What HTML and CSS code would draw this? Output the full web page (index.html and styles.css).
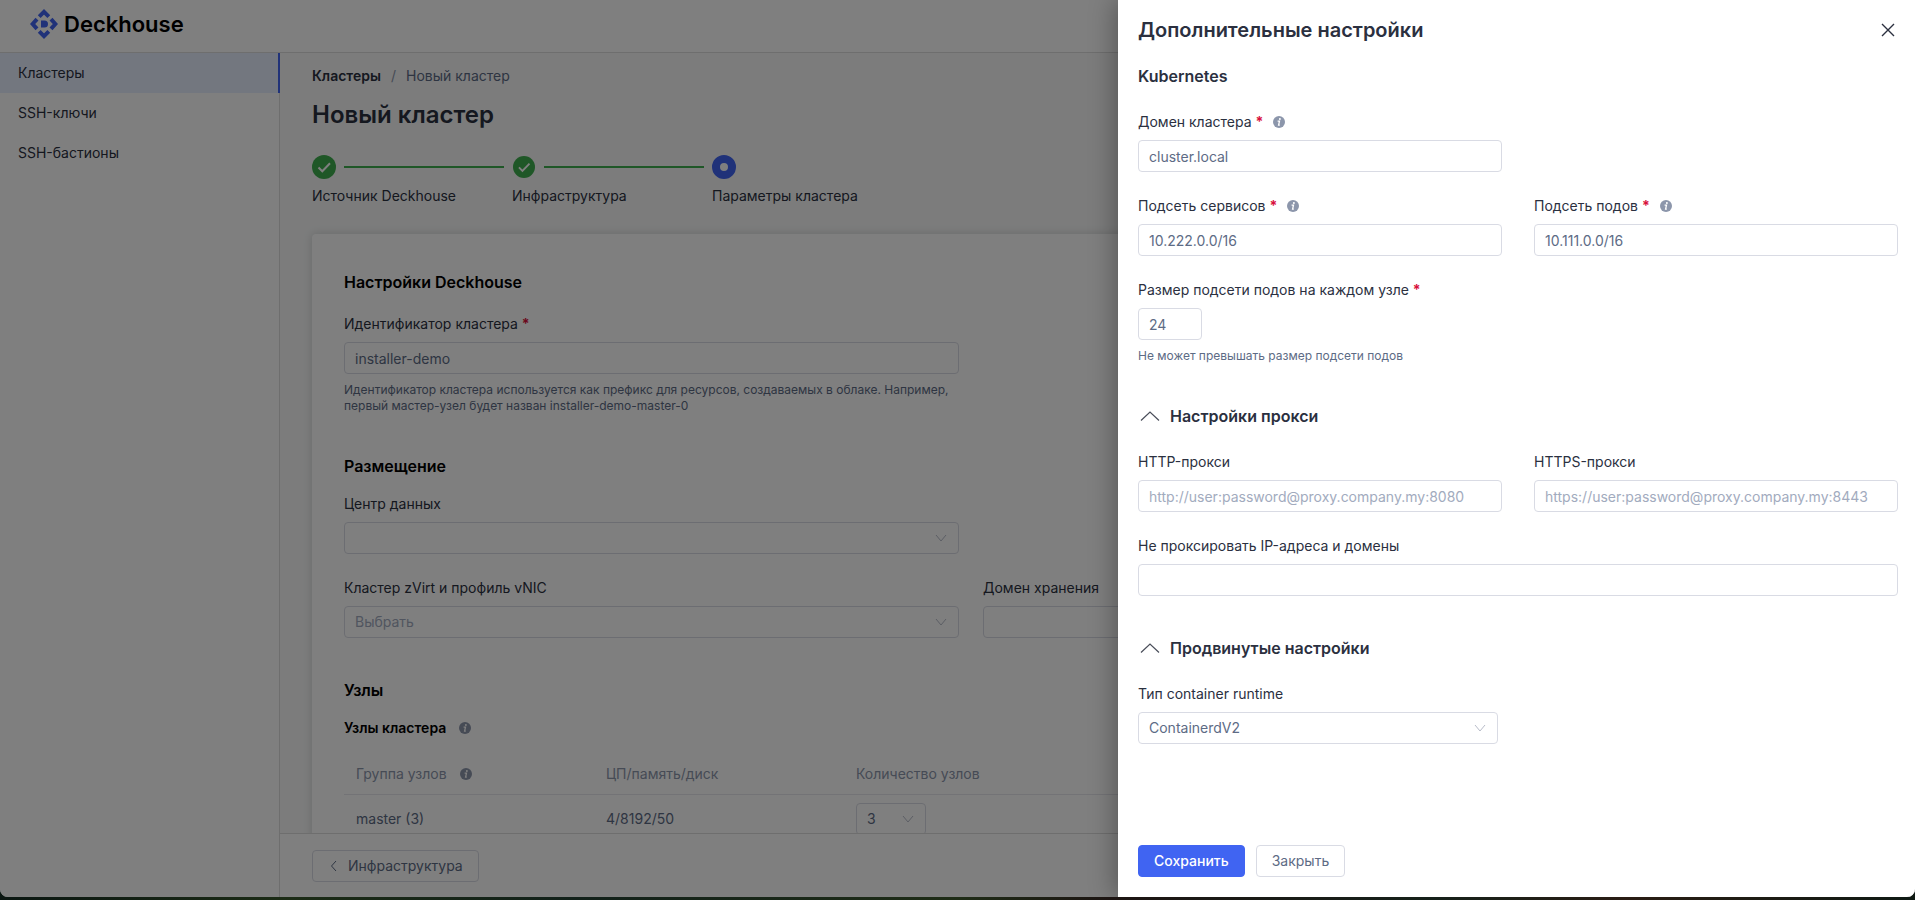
FILE: index.html
```html
<!DOCTYPE html>
<html lang="ru">
<head>
    <meta charset="UTF-8">
    <meta name="viewport" content="width=device-width, initial-scale=1.0">
    <title>Deckhouse - Новый кластер</title>
    <link rel="stylesheet" href="styles.css">
</head>
<body>
    <!-- Shared icons -->
    <svg class="sprite" aria-hidden="true">
        <symbol id="icon-info" viewBox="0 0 12 12">
            <circle cx="6" cy="6" r="6" fill="currentColor"/>
            <circle cx="6.900" cy="3" r="1" fill="#fff"/>
            <path d="M4.600 5.100h1.900L5.600 9.200h1.200" fill="none" stroke="#fff" stroke-width="1.300"/>
        </symbol>
        <symbol id="icon-check" viewBox="0 0 24 24">
            <circle cx="12" cy="12" r="12" fill="#3fae4e"/>
            <path d="M6.500 12.500l3.800 3.800L18 8.200" fill="none" stroke="#fff" stroke-width="2"/>
        </symbol>
        <symbol id="icon-down" viewBox="0 0 12 12">
            <path d="M1 3l5 6 5-6" fill="none" stroke="currentColor"/>
        </symbol>
        <symbol id="icon-up" viewBox="0 0 20 12">
            <path d="M1 10.500L10 2l9 8.500" fill="none" stroke="currentColor" stroke-width="1.200"/>
        </symbol>
    </svg>

    <div class="window">
        <header class="header">
            <a class="logo" href="#">
                <svg width="28" height="30" viewBox="0 0 28 30" fill="none" stroke="#4064f2" stroke-width="4">
                    <path d="M9.200 7.600L14 2.900l4.800 4.700M9.200 22.400l4.800 4.700 4.800-4.700M7 10.200L2.600 15 7 19.800M21 10.200l4.400 4.800-4.400 4.800"/>
                    <path d="M11 11.500h3.500a3.500 3.500 0 0 1 0 7H11z" fill="#4064f2" stroke="none"/>
                </svg>
                <span>Deckhouse</span>
            </a>
        </header>

        <div class="layout">
            <nav class="sidebar">
                <a class="active" href="#">Кластеры</a>
                <a href="#">SSH-ключи</a>
                <a href="#">SSH-бастионы</a>
            </nav>

            <div class="page">
                <main class="content">
                    <div class="breadcrumbs">
                        <a href="#">Кластеры</a>
                        <span class="slash">/</span>
                        <span>Новый кластер</span>
                    </div>
                    <h1>Новый кластер</h1>

                    <ol class="steps">
                        <li class="done">
                            <div class="step-mark"><svg class="step-big"><use href="#icon-check"/></svg></div>
                            Источник Deckhouse
                        </li>
                        <li class="done">
                            <div class="step-mark"><svg class="step-small"><use href="#icon-check"/></svg></div>
                            Инфраструктура
                        </li>
                        <li>
                            <div class="step-mark"><span class="step-current"></span></div>
                            Параметры кластера
                        </li>
                    </ol>

                    <div class="card">
                        <section>
                            <h2 class="card-title">Настройки Deckhouse</h2>
                            <div class="card-grid">
                                <div class="field">
                                    <label for="cluster-id">Идентификатор кластера <span class="required">*</span></label>
                                    <input type="text" id="cluster-id" value="installer-demo">
                                    <p class="hint">Идентификатор кластера используется как префикс для ресурсов, создаваемых в облаке. Например, первый мастер-узел будет назван installer-demo-master-0</p>
                                </div>
                            </div>
                        </section>

                        <section>
                            <h2>Размещение</h2>
                            <div class="card-grid">
                                <div class="field">
                                    <label for="datacenter">Центр данных</label>
                                    <div class="select">
                                        <select id="datacenter"><option></option></select>
                                        <svg><use href="#icon-down"/></svg>
                                    </div>
                                </div>
                                <div class="field first-column">
                                    <label for="zvirt">Кластер zVirt и профиль vNIC</label>
                                    <div class="select empty">
                                        <select id="zvirt"><option>Выбрать</option></select>
                                        <svg><use href="#icon-down"/></svg>
                                    </div>
                                </div>
                                <div class="field">
                                    <label for="storage">Домен хранения</label>
                                    <div class="select">
                                        <select id="storage"><option></option></select>
                                        <svg><use href="#icon-down"/></svg>
                                    </div>
                                </div>
                            </div>
                        </section>

                        <section>
                            <h2>Узлы</h2>
                            <h3>Узлы кластера <svg class="info"><use href="#icon-info"/></svg></h3>
                            <table>
                                <thead>
                                    <tr>
                                        <th>Группа узлов <svg class="info"><use href="#icon-info"/></svg></th>
                                        <th>ЦП/память/диск</th>
                                        <th>Количество узлов</th>
                                        <th></th>
                                    </tr>
                                </thead>
                                <tbody>
                                    <tr>
                                        <td>master (3)</td>
                                        <td>4/8192/50</td>
                                        <td>
                                            <div class="select select-count">
                                                <select aria-label="Количество узлов"><option>3</option></select>
                                                <svg><use href="#icon-down"/></svg>
                                            </div>
                                        </td>
                                        <td></td>
                                    </tr>
                                </tbody>
                            </table>
                        </section>
                    </div>
                </main>

                <footer class="page-footer">
                    <button type="button" class="button">
                        <svg width="12" height="12" viewBox="0 0 12 12"><path d="M8 1L3.500 6 8 11" fill="none" stroke="currentColor"/></svg>
                        Инфраструктура
                    </button>
                </footer>
            </div>
        </div>

        <div class="overlay"></div>

        <aside class="drawer" role="dialog" aria-labelledby="drawer-title">
            <div class="drawer-header">
                <h2 id="drawer-title">Дополнительные настройки</h2>
                <button type="button" class="close" aria-label="Закрыть">
                    <svg width="14" height="14" viewBox="0 0 14 14"><path d="M1 1l12 12M13 1L1 13" stroke="currentColor" stroke-width="1.400"/></svg>
                </button>
            </div>

            <form class="drawer-body">
                <h3>Kubernetes</h3>
                <div class="form-grid">
                    <div class="field">
                        <label for="domain">Домен кластера <span class="required">*</span> <svg class="info"><use href="#icon-info"/></svg></label>
                        <input type="text" id="domain" value="cluster.local">
                    </div>
                    <div class="field first-column">
                        <label for="services">Подсеть сервисов <span class="required">*</span> <svg class="info"><use href="#icon-info"/></svg></label>
                        <input type="text" id="services" value="10.222.0.0/16">
                    </div>
                    <div class="field">
                        <label for="pods">Подсеть подов <span class="required">*</span> <svg class="info"><use href="#icon-info"/></svg></label>
                        <input type="text" id="pods" value="10.111.0.0/16">
                    </div>
                    <div class="field wide">
                        <label for="prefix">Размер подсети подов на каждом узле <span class="required">*</span></label>
                        <input type="text" id="prefix" class="short" value="24">
                        <p class="hint">Не может превышать размер подсети подов</p>
                    </div>
                </div>

                <h3><button type="button" class="toggle"><svg><use href="#icon-up"/></svg>Настройки прокси</button></h3>
                <div class="form-grid">
                    <div class="field">
                        <label for="http">HTTP-прокси</label>
                        <input type="text" id="http" placeholder="http://user:password@proxy.company.my:8080">
                    </div>
                    <div class="field">
                        <label for="https">HTTPS-прокси</label>
                        <input type="text" id="https" placeholder="https://user:password@proxy.company.my:8443">
                    </div>
                    <div class="field wide">
                        <label for="no-proxy">Не проксировать IP-адреса и домены</label>
                        <input type="text" id="no-proxy">
                    </div>
                </div>

                <h3><button type="button" class="toggle"><svg><use href="#icon-up"/></svg>Продвинутые настройки</button></h3>
                <div class="form-grid">
                    <div class="field">
                        <label for="runtime">Тип container runtime</label>
                        <div class="select select-runtime">
                            <select id="runtime"><option>ContainerdV2</option></select>
                            <svg><use href="#icon-down"/></svg>
                        </div>
                    </div>
                </div>
            </form>

            <div class="drawer-footer">
                <button type="button" class="button primary">Сохранить</button>
                <button type="button" class="button">Закрыть</button>
            </div>
        </aside>
    </div>
</body>
</html>
```
FILE: styles.css
```css
* {
    box-sizing: border-box;
}
body {
    margin: 0;
    height: 100vh;
    padding-bottom: 3px;
    overflow: hidden;
    background: linear-gradient(90deg, #0b1712, #1c2c16 15%, #12211a 30%, #1f2d17 50%, #1d1513 58%, #16211a 75%, #2a1d14 85%, #0f1a14);
    font-family: Inter, sans-serif;
    font-size: 14px;
    line-height: 20px;
    color: #2b303f;
}
h1, h2, h3, p, ol {
    margin: 0;
    padding: 0;
}
a {
    color: inherit;
    text-decoration: none;
}
input, select, button {
    font: inherit;
    color: #5d6b85;
}
.sprite {
    display: none;
}
.window {
    position: relative;
    display: flex;
    flex-direction: column;
    height: 100%;
    overflow: hidden;
    border-radius: 0 0 8px 8px;
    background: white;
}

/* Page behind the drawer */
.header {
    flex: none;
    height: 53px;
    padding: 9px 30px;
    border-bottom: 1px solid #dcdcdc;
}
.logo {
    display: flex;
    align-items: center;
    gap: 6px;
    font-size: 22px;
    line-height: 30px;
    font-weight: 600;
    color: black;
}
.layout {
    flex: 1;
    display: flex;
    min-height: 0;
}
.sidebar {
    flex: none;
    width: 280px;
    border-right: 1px solid #dcdcdc;
}
.sidebar a {
    display: block;
    padding: 10px 18px;
}
.sidebar .active {
    margin-right: -1px;
    background: #e6effe;
    border-right: 2px solid #4064f2;
}
.page {
    flex: 1;
    min-width: 0;
    display: flex;
    flex-direction: column;
}
.content {
    flex: 1;
    min-height: 0;
    overflow: hidden;
    padding: 13px 32px 0;
    background: #f8f9f9;
}
.breadcrumbs {
    display: flex;
    gap: 10px;
    color: #5d6b85;
}
.breadcrumbs a {
    font-weight: 600;
    color: #2b303f;
}
.slash {
    color: #8c96ab;
}
h1 {
    margin-top: 13px;
    font-size: 24px;
    line-height: 32px;
    font-weight: 600;
}
.steps {
    display: flex;
    margin-top: 24px;
    list-style: none;
}
.steps li {
    width: 200px;
}
.step-mark {
    display: flex;
    align-items: center;
    height: 24px;
    margin-bottom: 7px;
}
.done .step-mark::after {
    content: "";
    flex: 1;
    height: 2px;
    margin: 0 8px;
    background: #3fae4e;
}
.step-big, .step-current {
    width: 24px;
    height: 24px;
}
.step-small {
    width: 22px;
    height: 22px;
    margin: 0 1px;
}
.step-current {
    border: 8px solid #4064f2;
    border-radius: 50%;
    background: white;
}
.card {
    margin-top: 28px;
    padding: 36px 32px;
    border-radius: 4px;
    background: white;
    box-shadow: 0 0 10px rgba(0,20,20,0.16);
}
.card section {
    margin-bottom: 40px;
}
.card h2 {
    margin-bottom: 16px;
    font-size: 16px;
    line-height: 24px;
    font-weight: 600;
    color: black;
}
.card .card-title {
    margin-bottom: 20px;
}
.card h3 {
    font-size: 14px;
    font-weight: 600;
    color: black;
}
.card-grid {
    display: grid;
    grid-template-columns: 1fr 1fr;
    gap: 24px;
    max-width: 1254px;
}
.first-column {
    grid-column: 1;
}
label {
    display: block;
    margin-bottom: 8px;
}
.required {
    font-weight: 700;
    color: #d8103c;
}
.info {
    width: 12px;
    height: 12px;
    margin-left: 6px;
    vertical-align: -1px;
    color: #8c96ab;
}
h3 .info, th .info {
    margin-left: 9px;
}
input, select {
    display: block;
    width: 100%;
    height: 32px;
    padding: 0 10px;
    border: 1px solid #d9dbe4;
    border-radius: 4px;
    background: white;
}
input::placeholder, .empty select {
    color: #a2abbe;
}
.select {
    position: relative;
}
.select select {
    appearance: none;
}
.select svg {
    position: absolute;
    top: 10px;
    right: 12px;
    width: 12px;
    height: 12px;
    color: #b8bcc9;
    pointer-events: none;
}
.select-count {
    width: 70px;
}
.select-runtime {
    max-width: 360px;
}
.hint {
    margin-top: 8px;
    font-size: 12px;
    line-height: 16px;
    color: #5d6b85;
}
table {
    width: 100%;
    margin-top: 16px;
    table-layout: fixed;
    border-collapse: collapse;
}
th, td {
    width: 250px;
    padding: 8px 12px;
    text-align: left;
    font-weight: 400;
    color: #5d6b85;
}
th {
    padding: 10px 12px;
    border-bottom: 1px solid #e6e7ec;
    color: #8c96ab;
}
th:last-child {
    width: auto;
}
.page-footer {
    flex: none;
    padding: 16px 32px 15px;
    border-top: 1px solid #dcdcdc;
    background: white;
}
.button {
    display: inline-flex;
    align-items: center;
    gap: 8px;
    height: 32px;
    padding: 0 15px;
    border: 1px solid #d9dbe4;
    border-radius: 4px;
    background: white;
}
.page-footer .button {
    display: flex;
}
.primary {
    border-color: #4064f2;
    background: #4064f2;
    font-weight: 500;
    color: white;
}

/* Drawer */
.overlay {
    position: absolute;
    inset: 0;
    background: rgba(0,0,0,0.5);
}
.drawer {
    position: absolute;
    top: 0;
    right: 0;
    bottom: 0;
    display: flex;
    flex-direction: column;
    width: 797px;
    padding: 0 17px 0 20px;
    background: white;
    box-shadow: -4px 0 24px rgba(0,0,0,0.3);
}
.drawer-header {
    display: flex;
    align-items: center;
    justify-content: space-between;
    padding-top: 16px;
}
.drawer-header h2 {
    font-size: 20px;
    line-height: 28px;
    font-weight: 600;
}
.close {
    display: flex;
    padding: 3px;
    border: none;
    background: none;
    color: #2b303f;
}
.drawer-body {
    flex: 1;
    padding-top: 20px;
}
.drawer-body h3 {
    margin-bottom: 24px;
    font-size: 16px;
    line-height: 24px;
    font-weight: 600;
}
.toggle {
    display: flex;
    align-items: center;
    gap: 10px;
    padding: 0 0 0 2px;
    border: none;
    background: none;
    color: #2b303f;
}
.toggle svg {
    width: 20px;
    height: 12px;
    color: #4a4e5a;
}
.form-grid {
    display: grid;
    grid-template-columns: 1fr 1fr;
    gap: 24px 32px;
    margin-bottom: 40px;
}
.wide {
    grid-column: 1 / -1;
}
.short {
    width: 64px;
}
.drawer-footer {
    display: flex;
    gap: 11px;
    padding-bottom: 20px;
}
```
